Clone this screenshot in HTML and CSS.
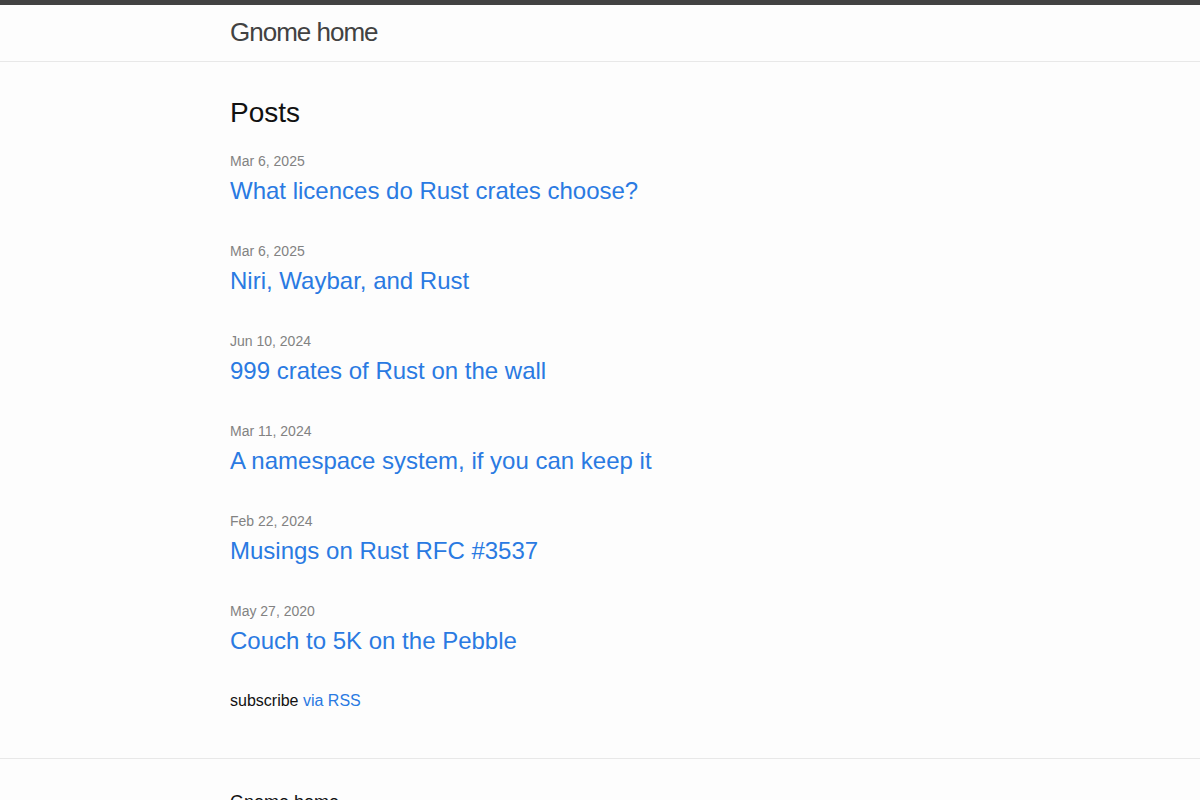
FILE: index.html
```html
<!DOCTYPE html>
<html lang="en">
<head>
<meta charset="utf-8">
<title>Gnome home</title>
<link rel="stylesheet" href="styles.css">
</head>
<body>
<header class="site-header">
  <div class="wrapper">
    <a class="site-title" href="#">Gnome home</a>
  </div>
</header>
<main class="page-content">
  <div class="wrapper">
    <div class="home">
      <h2 class="post-list-heading">Posts</h2>
      <ul class="post-list">
        <li><span class="post-meta">Mar 6, 2025</span><h3><a class="post-link" href="#">What licences do Rust crates choose?</a></h3></li>
        <li><span class="post-meta">Mar 6, 2025</span><h3><a class="post-link" href="#">Niri, Waybar, and Rust</a></h3></li>
        <li><span class="post-meta">Jun 10, 2024</span><h3><a class="post-link" href="#">999 crates of Rust on the wall</a></h3></li>
        <li><span class="post-meta">Mar 11, 2024</span><h3><a class="post-link" href="#">A namespace system, if you can keep it</a></h3></li>
        <li><span class="post-meta">Feb 22, 2024</span><h3><a class="post-link" href="#">Musings on Rust RFC #3537</a></h3></li>
        <li><span class="post-meta">May 27, 2020</span><h3><a class="post-link" href="#">Couch to 5K on the Pebble</a></h3></li>
      </ul>
      <p class="rss-subscribe">subscribe <a href="#">via RSS</a></p>
    </div>
  </div>
</main>
<footer class="site-footer">
  <div class="wrapper">
    <h2 class="footer-heading">Gnome home</h2>
  </div>
</footer>
</body>
</html>
```

FILE: styles.css
```css
html, body, h1, h2, h3, p, ul, li { margin: 0; padding: 0; }
body {
  font-family: "Liberation Sans", Arial, sans-serif;
  font-size: 16px;
  line-height: 1.5;
  font-weight: 400;
  color: #111111;
  background-color: #fdfdfd;
}
h2, h3, p, ul { margin-bottom: 15px; }
a { color: #2a7ae2; text-decoration: none; }
.wrapper {
  max-width: 740px;
  margin: 0 auto;
  padding: 0 30px;
}
.site-header {
  border-top: 5px solid #424242;
  border-bottom: 1px solid #e8e8e8;
  min-height: 55.95px;
  box-sizing: border-box;
  height: 62px;
}
.site-title {
  font-size: 26px;
  font-weight: 300;
  line-height: 54px;
  letter-spacing: -1px;
  color: #424242;
  display: inline-block;
}
.page-content { padding: 30px 0; }
.post-list-heading { font-size: 28px; font-weight: 400; }
.post-list { list-style: none; }
.post-list > li { margin-bottom: 30px; }
.post-list h3 { font-weight: 400; font-size: 24px; }
.post-meta { font-size: 14px; color: #828282; }
.post-link { display: block; font-size: 24px; }
.site-footer {
  border-top: 1px solid #e8e8e8;
  padding: 30px 0;
}
.footer-heading { font-size: 18px; font-weight: 400; margin-bottom: 15px; }
```
